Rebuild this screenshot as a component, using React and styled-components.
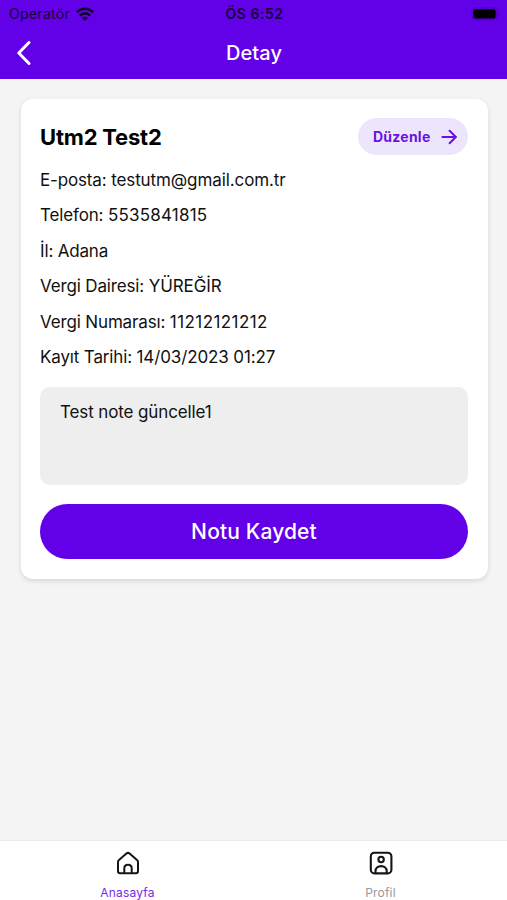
import React, { useState } from "react";
import styled, { createGlobalStyle } from "styled-components";

const customer = {
    name: "Utm2 Test2",
    fields: [
        { label: "E-posta", value: "testutm@gmail.com.tr", spacing: "-0.1px" },
        { label: "Telefon", value: "5535841815", spacing: "0.2px" },
        { label: "İl", value: "Adana", spacing: "-0.2px" },
        { label: "Vergi Dairesi", value: "YÜREĞİR", spacing: "-0.1px" },
        { label: "Vergi Numarası", value: "11212121212", spacing: "0.42px" },
        { label: "Kayıt Tarihi", value: "14/03/2023 01:27", spacing: "-0.12px" },
    ],
    note: "Test note güncelle1",
};

function WifiIcon() {
    return (
        <svg width="18" height="14" viewBox="0 0 18 14" fill="none" stroke="#0d0026" strokeWidth="2.6">
            <path d="M0.9 5.3C5.4 0.5 12.6 0.5 17.1 5.3" />
            <path d="M3.9 8.6C6.8 5.5 11.2 5.5 14.1 8.6" />
            <path d="M9 14L5.9 10.9C7.6 9.2 10.4 9.2 12.1 10.9Z" fill="#0d0026" stroke="none" />
        </svg>
    );
}

function BatteryIcon() {
    return (
        <svg width="29" height="14" viewBox="0 0 29 14">
            <rect x="0.8" y="0.8" width="25" height="12" rx="3.6" fill="none" stroke="#4a00b8" strokeWidth="1" />
            <rect x="2.2" y="2.2" width="22.4" height="9.4" rx="2" fill="#000" />
            <path d="M27 5V9C28.4 8.4 28.4 5.6 27 5Z" fill="#4a00b8" />
        </svg>
    );
}

function BackIcon() {
    return (
        <svg width="16" height="26" viewBox="0 0 16 26" fill="none" stroke="#fff" strokeWidth="3" strokeLinecap="round" strokeLinejoin="round">
            <path d="M13 2.5L2.8 13L13 23.5" />
        </svg>
    );
}

function ArrowIcon() {
    return (
        <svg width="16" height="16" viewBox="0 0 16 16" fill="none" stroke="#6a12e0" strokeWidth="2" strokeLinecap="round" strokeLinejoin="round">
            <path d="M1.4 8H14.6" />
            <path d="M8.6 1.8L14.8 8L8.6 14.2" />
        </svg>
    );
}

function HomeIcon() {
    return (
        <svg width="24" height="24" viewBox="0 0 24 24" fill="none" stroke="#151515" strokeWidth="2" strokeLinejoin="round">
            <path d="M2 11.2C2 10.3 2.3 9.7 3 9.1L10.4 2.5C11.4 1.7 12.6 1.7 13.6 2.5L21 9.1C21.7 9.7 22 10.3 22 11.2V20C22 21.5 21.2 22.2 19.8 22.2H4.2C2.8 22.2 2 21.5 2 20Z" />
            <path d="M8.3 22V17.3C8.3 12.5 15.7 12.5 15.7 17.3V22" />
        </svg>
    );
}

function ProfileIcon() {
    return (
        <svg width="24" height="24" viewBox="0 0 24 24" fill="none" stroke="#151515" strokeWidth="2.1">
            <rect x="1.8" y="1.8" width="20.6" height="20.6" rx="3.6" />
            <circle cx="12.1" cy="8.5" r="2.7" />
            <path d="M6.5 22V20.3C6.5 13.4 17.7 13.4 17.7 20.3V22" />
        </svg>
    );
}

function Detail() {
    const [note, setNote] = useState(customer.note);

    return (
        <Card>
            <CardHead>
                <Name>{customer.name}</Name>
                <EditButton>
                    Düzenle
                    <ArrowIcon />
                </EditButton>
            </CardHead>
            <Fields>
                {customer.fields.map((field) => (
                    <Field key={field.label}>
                        {field.label}: <Value $spacing={field.spacing}>{field.value}</Value>
                    </Field>
                ))}
            </Fields>
            <Note value={note} spellCheck={false} onChange={(e) => setNote(e.target.value)} />
            <SaveButton>Notu Kaydet</SaveButton>
        </Card>
    );
}

function App() {
    return (
        <Screen>
            <GlobalStyle />
            <Header>
                <StatusBar>
                    <Carrier>
                        Operatör
                        <WifiIcon />
                    </Carrier>
                    <Clock>ÖS 6:52</Clock>
                    <Battery>
                        <BatteryIcon />
                    </Battery>
                </StatusBar>
                <NavBar>
                    <BackButton aria-label="Geri">
                        <BackIcon />
                    </BackButton>
                    <Title>Detay</Title>
                </NavBar>
            </Header>
            <Content>
                <Detail />
            </Content>
            <TabBar>
                <Tab $active>
                    <HomeIcon />
                    <span>Anasayfa</span>
                </Tab>
                <Tab>
                    <ProfileIcon />
                    <span>Profil</span>
                </Tab>
            </TabBar>
        </Screen>
    );
}

const GlobalStyle = createGlobalStyle`
    * {
        box-sizing: border-box;
    }
    body {
        margin: 0;
        font-family: Inter, "Liberation Sans", sans-serif;
    }
    button,
    textarea {
        font-family: inherit;
        border: none;
        margin: 0;
        padding: 0;
    }
    svg {
        display: block;
        flex-shrink: 0;
    }
`;

const Screen = styled.main`
    display: flex;
    flex-direction: column;
    height: 900px;
    background: #f4f4f4;
`;

const Header = styled.header`
    height: 79px;
    background: #6200e8;
`;

const StatusBar = styled.div`
    display: grid;
    grid-template-columns: 1fr auto 1fr;
    align-items: center;
    height: 27px;
    padding: 0 7px 0 9px;
    color: #160038;
`;

const Carrier = styled.div`
    display: flex;
    align-items: center;
    gap: 6px;
    font-size: 14px;
    letter-spacing: 0.3px;
`;

const Clock = styled.div`
    font-size: 14px;
    font-weight: 600;
    letter-spacing: 0.5px;
`;

const Battery = styled.div`
    justify-self: end;
`;

const NavBar = styled.div`
    display: grid;
    grid-template-columns: 1fr auto 1fr;
    align-items: center;
    height: 51px;
    padding: 0 15px 0 16px;
`;

const BackButton = styled.button`
    justify-self: start;
    background: none;
`;

const Title = styled.h1`
    margin: 0;
    color: #fff;
    font-size: 20px;
    font-weight: 500;
    line-height: 26px;
    letter-spacing: 0.1px;
`;

const Content = styled.div`
    flex: 1;
    padding: 20px 19px 0 21px;
`;

const Card = styled.section`
    display: flex;
    flex-direction: column;
    height: 480px;
    padding: 19px 20px 20px 19px;
    border-radius: 12px;
    background: #fff;
    box-shadow: 0 2px 5px rgba(0, 0, 0, 0.12);
`;

const CardHead = styled.div`
    display: flex;
    align-items: center;
    justify-content: space-between;
    height: 37px;
`;

const Name = styled.h2`
    margin: 0;
    color: #000;
    font-size: 22px;
    font-weight: 700;
    letter-spacing: -0.2px;
`;

const EditButton = styled.button`
    display: flex;
    align-items: center;
    justify-content: space-between;
    width: 110px;
    height: 37px;
    padding: 0 11px 0 15px;
    border-radius: 19px;
    background: #ede5fb;
    color: #6a12e0;
    font-size: 14px;
    font-weight: 700;
    letter-spacing: 0.25px;
`;

const Fields = styled.div`
    margin-top: 8px;
`;

const Field = styled.p`
    margin: 0;
    color: #111;
    font-size: 17px;
    line-height: 35.4px;
    letter-spacing: -0.15px;
    white-space: nowrap;
`;

const Value = styled.span`
    letter-spacing: ${(props) => props.$spacing};
`;

const Note = styled.textarea`
    display: block;
    width: 100%;
    height: 98px;
    margin-top: 12px;
    padding: 14px 20px;
    border-radius: 10px;
    outline: none;
    resize: none;
    background: #eee;
    color: #111;
    font-size: 17px;
    line-height: 22px;
    letter-spacing: -0.12px;
`;

const SaveButton = styled.button`
    height: 55px;
    margin-top: 19px;
    border-radius: 28px;
    background: #6200e8;
    color: #fff;
    font-size: 21px;
    font-weight: 500;
    letter-spacing: 0.15px;
`;

const TabBar = styled.nav`
    display: flex;
    height: 60px;
    padding-left: 1px;
    border-top: 1px solid #ebebeb;
    background: #fff;
`;

const Tab = styled.a`
    flex: 1;
    display: flex;
    flex-direction: column;
    align-items: center;
    gap: 10px;
    padding-top: 10px;
    color: ${(props) => (props.$active ? "#7a2be8" : "#999")};
    font-size: 12px;
    line-height: 16px;
    letter-spacing: 0.2px;
`;

export default App;
